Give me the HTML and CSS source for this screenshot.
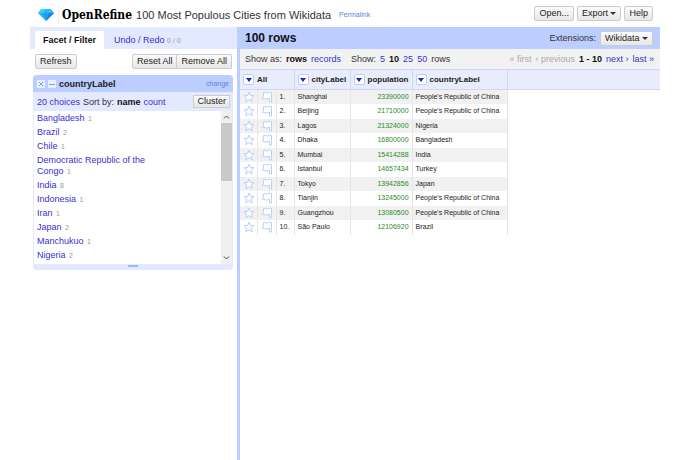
FILE: index.html
```html
<!DOCTYPE html>
<html lang="en">
<head>
<meta charset="utf-8">
<title>100 Most Populous Cities from Wikidata - OpenRefine</title>
<link rel="stylesheet" href="styles.css">
</head>
<body>
<svg class="defs" aria-hidden="true">
  <symbol id="star" viewBox="0 0 12 12"><path d="M6 1 7.4 4.500 11 4.700 8.200 7 9.200 10.800 6 8.700 2.800 10.800 3.800 7 1 4.700 4.600 4.500Z"/></symbol>
  <symbol id="flag" viewBox="0 0 12 12"><path d="M10.500 11V1.500C8 .8 7 2.200 5 1.800L2.500 1.500V5L1.300 7.500C3.500 6.700 4.500 8.500 6 8L8.500 7.200V11Z"/></symbol>
</svg>
<header class="top">
  <svg class="gem" viewBox="0 0 16 12" aria-hidden="true">
    <path fill="#22b4f5" d="M3.500 0H12.500L16 4 8 12 0 4Z"/>
    <path fill="#40c8ff" d="M3.500 0H8L5 4H0Z"/>
    <path fill="#30bdfa" d="M8 0H12.500L16 4H11Z"/>
    <path fill="#1d9df2" d="M5 4H11L8 12Z"/>
    <path fill="#1782e6" d="M11 4H16L8 12Z"/>
  </svg>
  <span class="brand">OpenRefine</span>
  <h1 class="project">100 Most Populous Cities from Wikidata</h1>
  <a class="permalink" href="#">Permalink</a>
  <div class="actions">
    <button class="btn">Open...</button>
    <button class="btn">Export <i class="caret"></i></button>
    <button class="btn">Help</button>
  </div>
</header>
<div class="body">
  <aside class="side">
    <nav class="tabs">
      <a class="tab active" href="#">Facet / Filter</a>
      <a class="tab" href="#">Undo / Redo <small>0 / 0</small></a>
    </nav>
    <div class="tools">
      <button class="btn">Refresh</button>
      <div class="joined"><button class="btn">Reset All</button><button class="btn">Remove All</button></div>
    </div>
    <section class="facet">
      <div class="facet-title">
        <button class="mini" aria-label="Remove facet"><svg viewBox="0 0 8 8"><path d="M2 2 6 6M6 2 2 6"/></svg></button>
        <button class="mini" aria-label="Minimize facet"><svg viewBox="0 0 8 8"><path d="M1 4.500H7"/></svg></button>
        <h2>countryLabel</h2>
        <a href="#">change</a>
      </div>
      <div class="facet-controls">
        <a href="#">20 choices</a><span>Sort by:</span><b>name</b><a href="#">count</a>
        <button class="btn">Cluster</button>
      </div>
      <div class="facet-body">
        <ul class="choices">
          <li><a href="#">Bangladesh</a> <small>1</small></li>
          <li><a href="#">Brazil</a> <small>2</small></li>
          <li><a href="#">Chile</a> <small>1</small></li>
          <li><a href="#">Democratic Republic of the Congo</a> <small>1</small></li>
          <li><a href="#">India</a> <small>8</small></li>
          <li><a href="#">Indonesia</a> <small>1</small></li>
          <li><a href="#">Iran</a> <small>1</small></li>
          <li><a href="#">Japan</a> <small>2</small></li>
          <li><a href="#">Manchukuo</a> <small>1</small></li>
          <li><a href="#">Nigeria</a> <small>2</small></li>
        </ul>
        <div class="scroll" aria-hidden="true">
          <svg viewBox="0 0 10 12"><path d="M2.500 7.500 5 5 7.500 7.500"/></svg>
          <div class="thumb"></div>
          <svg class="down" viewBox="0 0 10 12"><path d="M2.500 4.500 5 7 7.500 4.500"/></svg>
        </div>
      </div>
      <div class="grip"></div>
    </section>
  </aside>
  <main class="main">
    <div class="summary">
      <h2>100 rows</h2>
      <span>Extensions:</span>
      <button class="btn">Wikidata <i class="caret"></i></button>
    </div>
    <div class="view">
      <div class="group"><span>Show as:</span><b>rows</b><a href="#">records</a></div>
      <div class="group sizes"><span>Show:</span><a href="#">5</a><b>10</b><a href="#">25</a><a href="#">50</a><span>rows</span></div>
      <div class="group pager"><span class="off">« first</span><span class="off">‹ previous</span><b>1 - 10</b><a href="#">next ›</a><a href="#">last »</a></div>
    </div>
    <table class="grid">
      <colgroup><col class="c-star"><col class="c-flag"><col class="c-num"><col class="c-city"><col class="c-pop"><col class="c-country"><col></colgroup>
      <thead>
        <tr>
          <th colspan="3"><div><button class="drop" aria-label="All menu"></button>All</div></th>
          <th><div><button class="drop" aria-label="cityLabel menu"></button>cityLabel</div></th>
          <th><div><button class="drop" aria-label="population menu"></button>population</div></th>
          <th><div><button class="drop" aria-label="countryLabel menu"></button>countryLabel</div></th>
          <th></th>
        </tr>
      </thead>
      <tbody>
        <tr><td><svg><use href="#star"/></svg></td><td><svg><use href="#flag"/></svg></td><td>1.</td><td>Shanghai</td><td class="n">23390000</td><td>People's Republic of China</td><td></td></tr>
        <tr><td><svg><use href="#star"/></svg></td><td><svg><use href="#flag"/></svg></td><td>2.</td><td>Beijing</td><td class="n">21710000</td><td>People's Republic of China</td><td></td></tr>
        <tr><td><svg><use href="#star"/></svg></td><td><svg><use href="#flag"/></svg></td><td>3.</td><td>Lagos</td><td class="n">21324000</td><td>Nigeria</td><td></td></tr>
        <tr><td><svg><use href="#star"/></svg></td><td><svg><use href="#flag"/></svg></td><td>4.</td><td>Dhaka</td><td class="n">16800000</td><td>Bangladesh</td><td></td></tr>
        <tr><td><svg><use href="#star"/></svg></td><td><svg><use href="#flag"/></svg></td><td>5.</td><td>Mumbai</td><td class="n">15414288</td><td>India</td><td></td></tr>
        <tr><td><svg><use href="#star"/></svg></td><td><svg><use href="#flag"/></svg></td><td>6.</td><td>Istanbul</td><td class="n">14657434</td><td>Turkey</td><td></td></tr>
        <tr><td><svg><use href="#star"/></svg></td><td><svg><use href="#flag"/></svg></td><td>7.</td><td>Tokyo</td><td class="n">13942856</td><td>Japan</td><td></td></tr>
        <tr><td><svg><use href="#star"/></svg></td><td><svg><use href="#flag"/></svg></td><td>8.</td><td>Tianjin</td><td class="n">13245000</td><td>People's Republic of China</td><td></td></tr>
        <tr><td><svg><use href="#star"/></svg></td><td><svg><use href="#flag"/></svg></td><td>9.</td><td>Guangzhou</td><td class="n">13080500</td><td>People's Republic of China</td><td></td></tr>
        <tr><td><svg><use href="#star"/></svg></td><td><svg><use href="#flag"/></svg></td><td>10.</td><td>São Paulo</td><td class="n">12106920</td><td>Brazil</td><td></td></tr>
      </tbody>
    </table>
  </main>
</div>
</body>
</html>
```
FILE: styles.css
```css
* { box-sizing: border-box; }
body {
  margin: 0;
  padding: 0 30px;
  min-height: 100vh;
  display: flex;
  flex-direction: column;
  background: #fff;
  color: #333;
  font: 9px/12px "Liberation Sans", Arial, sans-serif;
}
a { color: #3a2fd0; text-decoration: none; }
b { color: #111; }
h1, h2, ul { margin: 0; padding: 0; }
.defs { position: absolute; width: 0; height: 0; }

.btn {
  height: 15px;
  padding: 0 4px;
  border: 1px solid #ccc;
  border-radius: 2px;
  background: linear-gradient(#fcfcfc, #e6e6e6);
  color: #222;
  font: inherit;
  line-height: 13px;
  white-space: nowrap;
}
.caret {
  display: inline-block;
  vertical-align: 1px;
  border: solid transparent;
  border-width: 3px 3px 0;
  border-top-color: #333;
}

.top { display: flex; align-items: center; height: 27px; padding: 3px 7px 0 8px; }
.gem { width: 16px; height: 12px; margin-right: 4px; }
.brand { padding-left: 3px; border-left: 1px solid #edf1fb; color: #000; font: bold 12px/20px "DejaVu Serif Condensed", "DejaVu Serif", serif; }
.project { margin-left: 4px; color: #333; font-size: 11px; font-weight: normal; }
.permalink { margin-left: 8px; color: #5b84e0; font-size: 7px; }
.actions { display: flex; align-self: flex-start; gap: 3px; margin: 3px 0 0 auto; }

.body { display: flex; flex: 1; }
.side { flex: 0 0 207px; }
.main { flex: 1; min-width: 0; border-left: 3px solid #bccdff; }

.tabs { display: flex; align-items: flex-end; height: 22px; padding-left: 5px; background: #e3e9ff; }
.tab { height: 18px; padding: 0 8px; line-height: 18px; margin-right: 2px; }
.tab.active { background: #fff; color: #111; font-weight: bold; }
small { color: #999; font-size: 7px; line-height: 1; }
.tools { display: flex; justify-content: space-between; padding: 5px 5px 6px; }
.joined { display: flex; }
.joined .btn:first-child { border-radius: 2px 0 0 2px; }
.joined .btn:last-child { border-left: 0; border-radius: 0 2px 2px 0; }

.facet { margin: 0 4px 0 3px; border-radius: 4px; background: #e3e9ff; overflow: hidden; }
.facet-title { display: flex; align-items: center; height: 17px; gap: 3px; padding: 0 4px; background: #bccdff; }
.facet-title h2 { color: #222; font-size: 9px; }
.facet-title a { margin-left: auto; color: #5b84e0; font-size: 7px; }
.mini { width: 8px; height: 8px; padding: 0; border: 0; background: #e8efff; }
.mini svg { display: block; fill: none; stroke: #7d9cf0; }
.facet-controls { display: flex; align-items: center; height: 19px; gap: 3px; padding: 0 3px 0 4px; white-space: nowrap; }
.facet-controls .btn { margin-left: auto; height: 13px; padding: 0 3px; line-height: 11px; border-radius: 0; }
.facet-body { display: flex; border: solid #e3e9ff; border-width: 0 1px; background: #fff; }
.choices { flex: 1; padding: 1px 72px 1px 3px; list-style: none; line-height: 11px; }
.choices li { padding: 1px 0 2px; }
.choices small { margin-left: 1px; }
.scroll { display: flex; flex-direction: column; width: 11px; background: #f0f0f0; }
.scroll svg { height: 12px; fill: none; stroke: #444; }
.thumb { height: 58px; background: #c9c9c9; }
.down { margin-top: auto; }
.grip { height: 6px; padding-top: 1px; }
.grip::before { content: ""; display: block; width: 10px; height: 2px; margin: 0 auto; background: #9db9f5; }

.summary { display: flex; align-items: center; height: 22px; padding: 0 7px 0 5px; gap: 4px; background: #bccdff; }
.summary h2 { margin-right: auto; color: #111; font-size: 12px; }
.view { display: flex; align-items: center; height: 20px; padding: 0 6px 0 5px; background: #f2f2f2; white-space: nowrap; }
.group { display: flex; gap: 4px; }
.sizes { margin-left: 10px; }
.pager { margin-left: auto; }
.off { color: #aaa; }

.grid { width: 100%; table-layout: fixed; border-collapse: collapse; font-size: 7px; line-height: 10px; color: #222; }
.c-star { width: 17px; }
.c-flag { width: 19px; }
.c-num { width: 18px; }
.c-city { width: 56px; }
.c-pop { width: 62px; }
.c-country { width: 95px; }
.grid th { height: 20px; padding: 0 3px; border: solid #ccd6ff; border-width: 1px 1px 1px 0; background: #e8ecfb; text-align: left; font-size: 8px; }
.grid th:last-child { border-right: 0; }
.grid th div { display: flex; align-items: center; gap: 3px; }
.drop { flex: none; display: grid; place-items: center; width: 11px; height: 11px; padding: 0; border: 1px solid #bccdff; border-radius: 2px; background: #fff; }
.drop::before { content: ""; border: solid transparent; border-width: 4px 3px 0; border-top-color: #2a20c8; }
.grid td { height: 14px; padding: 0 3px; border-right: 1px solid #e6e6e6; white-space: nowrap; }
.grid tr:nth-child(even) td { height: 15px; }
.grid tbody tr:nth-child(odd) td:not(:last-child) { background: #f1f1f1; }
.grid td:last-child { border: 0; }
.grid td svg { display: block; width: 12px; height: 12px; fill: #fff; stroke: #bcd0fa; }
.grid .n { color: #2a8a2a; text-align: right; }
```
